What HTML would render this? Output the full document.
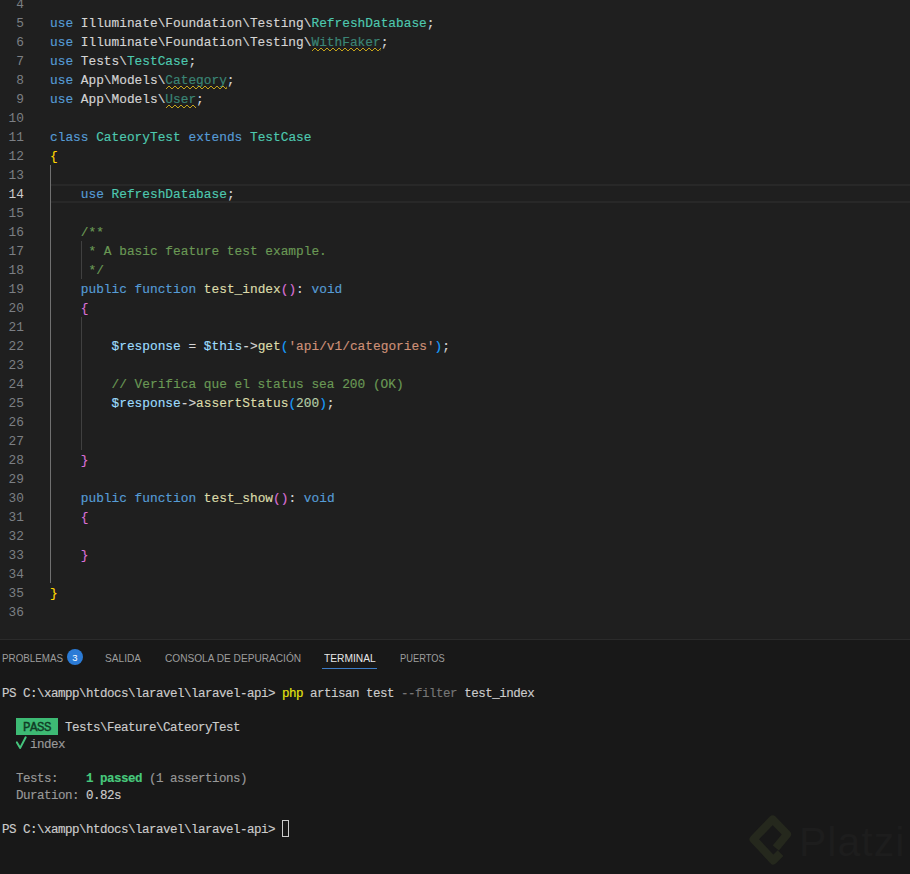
<!DOCTYPE html>
<html><head><meta charset="utf-8">
<style>
html,body{margin:0;padding:0;}
body{width:910px;height:874px;overflow:hidden;background:#1f1f1f;position:relative;font-family:"Liberation Mono",monospace;}
.ed{position:absolute;left:0;top:0;width:910px;height:639px;background:#1f1f1f;overflow:hidden;}
.ln{position:absolute;left:0;width:24px;text-align:right;height:19px;line-height:19px;font-size:12.826px;color:#7c7f84;white-space:pre;}
.ln.act{color:#cccccc;}
.cl{-webkit-text-stroke:0.15px currentColor;position:absolute;left:50px;height:19px;line-height:19px;font-size:12.826px;white-space:pre;color:#d4d4d4;}
.cur{position:absolute;left:50px;right:0;top:184px;height:19px;box-sizing:border-box;border-top:2px solid #282828;border-bottom:2px solid #282828;}
.ig{position:absolute;width:1px;background:#404040;}
.ig.act{background:#707070;}
.fade{opacity:0.6;}
.sq{position:absolute;height:4px;}
.panel{position:absolute;left:0;top:639px;width:910px;height:235px;background:#181818;border-top:1px solid #2b2b2b;box-sizing:border-box;}
.tab{position:absolute;top:651px;height:14px;line-height:14px;font-family:"Liberation Sans",sans-serif;font-size:11px;color:#9d9d9d;white-space:pre;transform-origin:0 50%;}
.tab.act{color:#e7e7e7;}
.badge{position:absolute;left:67px;top:649px;width:16px;height:16px;border-radius:8px;background:#2b7bd6;color:#fff;font-family:"Liberation Sans",sans-serif;font-size:9.5px;line-height:18px;text-align:center;}
.tl{-webkit-text-stroke:0.15px currentColor;position:absolute;left:2px;height:17px;line-height:17px;font-size:12.5px;letter-spacing:-0.5px;white-space:pre;color:#cccccc;}
</style></head><body>
<div class="ed">

<div class="cur"></div>
<div class="ln" style="top:-5px">4</div>
<div class="ln" style="top:14px">5</div>
<div class="ln" style="top:33px">6</div>
<div class="ln" style="top:52px">7</div>
<div class="ln" style="top:71px">8</div>
<div class="ln" style="top:90px">9</div>
<div class="ln" style="top:109px">10</div>
<div class="ln" style="top:128px">11</div>
<div class="ln" style="top:147px">12</div>
<div class="ln" style="top:166px">13</div>
<div class="ln act" style="top:185px">14</div>
<div class="ln" style="top:204px">15</div>
<div class="ln" style="top:223px">16</div>
<div class="ln" style="top:242px">17</div>
<div class="ln" style="top:261px">18</div>
<div class="ln" style="top:280px">19</div>
<div class="ln" style="top:299px">20</div>
<div class="ln" style="top:318px">21</div>
<div class="ln" style="top:337px">22</div>
<div class="ln" style="top:356px">23</div>
<div class="ln" style="top:375px">24</div>
<div class="ln" style="top:394px">25</div>
<div class="ln" style="top:413px">26</div>
<div class="ln" style="top:432px">27</div>
<div class="ln" style="top:451px">28</div>
<div class="ln" style="top:470px">29</div>
<div class="ln" style="top:489px">30</div>
<div class="ln" style="top:508px">31</div>
<div class="ln" style="top:527px">32</div>
<div class="ln" style="top:546px">33</div>
<div class="ln" style="top:565px">34</div>
<div class="ln" style="top:584px">35</div>
<div class="ln" style="top:603px">36</div>
<div class="ig act" style="left:50px;top:165px;height:418px"></div>
<div class="ig" style="left:81px;top:241px;height:38px"></div>
<div class="ig" style="left:81px;top:317px;height:133px"></div>
<div class="cl" style="top:14px"><span style="color:#569cd6">use</span><span style="color:#d4d4d4"> Illuminate\Foundation\Testing\</span><span style="color:#4ec9b0">RefreshDatabase</span><span style="color:#d4d4d4">;</span></div>
<div class="cl" style="top:33px"><span style="color:#569cd6">use</span><span style="color:#d4d4d4"> Illuminate\Foundation\Testing\</span><span class="fade" style="color:#4ec9b0">WithFaker</span><span style="color:#d4d4d4">;</span></div>
<div class="cl" style="top:52px"><span style="color:#569cd6">use</span><span style="color:#d4d4d4"> Tests\</span><span style="color:#4ec9b0">TestCase</span><span style="color:#d4d4d4">;</span></div>
<div class="cl" style="top:71px"><span style="color:#569cd6">use</span><span style="color:#d4d4d4"> App\Models\</span><span class="fade" style="color:#4ec9b0">Category</span><span style="color:#d4d4d4">;</span></div>
<div class="cl" style="top:90px"><span style="color:#569cd6">use</span><span style="color:#d4d4d4"> App\Models\</span><span class="fade" style="color:#4ec9b0">User</span><span style="color:#d4d4d4">;</span></div>
<div class="cl" style="top:128px"><span style="color:#569cd6">class</span><span style="color:#d4d4d4"> </span><span style="color:#4ec9b0">CateoryTest</span><span style="color:#d4d4d4"> </span><span style="color:#569cd6">extends</span><span style="color:#d4d4d4"> </span><span style="color:#4ec9b0">TestCase</span></div>
<div class="cl" style="top:147px"><span style="color:#ffd700">{</span></div>
<div class="cl" style="top:185px"><span style="color:#d4d4d4">    </span><span style="color:#569cd6">use</span><span style="color:#d4d4d4"> </span><span style="color:#4ec9b0">RefreshDatabase</span><span style="color:#d4d4d4">;</span></div>
<div class="cl" style="top:223px"><span style="color:#6a9955">    /**</span></div>
<div class="cl" style="top:242px"><span style="color:#6a9955">     * A basic feature test example.</span></div>
<div class="cl" style="top:261px"><span style="color:#6a9955">     */</span></div>
<div class="cl" style="top:280px"><span style="color:#d4d4d4">    </span><span style="color:#569cd6">public</span><span style="color:#d4d4d4"> </span><span style="color:#569cd6">function</span><span style="color:#d4d4d4"> </span><span style="color:#dcdcaa">test_index</span><span style="color:#da70d6">()</span><span style="color:#d4d4d4">: </span><span style="color:#569cd6">void</span></div>
<div class="cl" style="top:299px"><span style="color:#d4d4d4">    </span><span style="color:#da70d6">{</span></div>
<div class="cl" style="top:337px"><span style="color:#d4d4d4">        </span><span style="color:#9cdcfe">$response</span><span style="color:#d4d4d4"> = </span><span style="color:#9cdcfe">$this</span><span style="color:#d4d4d4">-&gt;</span><span style="color:#dcdcaa">get</span><span style="color:#179fff">(</span><span style="color:#ce9178">&#x27;api/v1/categories&#x27;</span><span style="color:#179fff">)</span><span style="color:#d4d4d4">;</span></div>
<div class="cl" style="top:375px"><span style="color:#6a9955">        // Verifica que el status sea 200 (OK)</span></div>
<div class="cl" style="top:394px"><span style="color:#d4d4d4">        </span><span style="color:#9cdcfe">$response</span><span style="color:#d4d4d4">-&gt;</span><span style="color:#dcdcaa">assertStatus</span><span style="color:#179fff">(</span><span style="color:#b5cea8">200</span><span style="color:#179fff">)</span><span style="color:#d4d4d4">;</span></div>
<div class="cl" style="top:451px"><span style="color:#d4d4d4">    </span><span style="color:#da70d6">}</span></div>
<div class="cl" style="top:489px"><span style="color:#d4d4d4">    </span><span style="color:#569cd6">public</span><span style="color:#d4d4d4"> </span><span style="color:#569cd6">function</span><span style="color:#d4d4d4"> </span><span style="color:#dcdcaa">test_show</span><span style="color:#da70d6">()</span><span style="color:#d4d4d4">: </span><span style="color:#569cd6">void</span></div>
<div class="cl" style="top:508px"><span style="color:#d4d4d4">    </span><span style="color:#da70d6">{</span></div>
<div class="cl" style="top:546px"><span style="color:#d4d4d4">    </span><span style="color:#da70d6">}</span></div>
<div class="cl" style="top:584px"><span style="color:#ffd700">}</span></div>
<svg class="sq" style="left:311.7px;top:48px;width:69.3px" width="69.3" height="4"><polyline points="0.0,3 3.0,0 6.0,3 9.0,0 12.0,3 15.0,0 18.0,3 21.0,0 24.0,3 27.0,0 30.0,3 33.0,0 36.0,3 39.0,0 42.0,3 45.0,0 48.0,3 51.0,0 54.0,3 57.0,0 60.0,3 63.0,0 66.0,3 69.0,0 69.3,3" fill="none" stroke="#c4a41c" stroke-width="1"/></svg>
<svg class="sq" style="left:165.5px;top:86px;width:61.6px" width="61.6" height="4"><polyline points="0.0,3 3.0,0 6.0,3 9.0,0 12.0,3 15.0,0 18.0,3 21.0,0 24.0,3 27.0,0 30.0,3 33.0,0 36.0,3 39.0,0 42.0,3 45.0,0 48.0,3 51.0,0 54.0,3 57.0,0 60.0,3 61.6,0" fill="none" stroke="#c4a41c" stroke-width="1"/></svg>
<svg class="sq" style="left:165.5px;top:105px;width:30.8px" width="30.8" height="4"><polyline points="0.0,3 3.0,0 6.0,3 9.0,0 12.0,3 15.0,0 18.0,3 21.0,0 24.0,3 27.0,0 30.0,3 30.8,0" fill="none" stroke="#c4a41c" stroke-width="1"/></svg>
</div>
<div class="panel"></div>
<div class="tab" style="left:2px;transform:scaleX(0.893)">PROBLEMAS</div>
<div class="tab" style="left:105px;transform:scaleX(0.92)">SALIDA</div>
<div class="tab" style="left:164.5px;transform:scaleX(0.92)">CONSOLA DE DEPURACIÓN</div>
<div class="tab act" style="left:324.3px;transform:scaleX(0.93)">TERMINAL</div>
<div class="tab" style="left:400px;transform:scaleX(0.846)">PUERTOS</div>
<div class="badge">3</div>
<div style="position:absolute;left:322px;top:668px;width:55px;height:1px;background:#3d7cc6"></div>
<div style="position:absolute;left:16px;top:718px;width:42px;height:17px;background:#3dba74"></div>
<div class="tl" style="top:686px"><span style="color:#cccccc">PS C:\xampp\htdocs\laravel\laravel-api&gt; </span><span style="color:#e5e510">php</span><span style="color:#cccccc"> artisan test </span><span style="color:#767676">--filter</span><span style="color:#cccccc"> test_index</span></div>
<div class="tl" style="top:720px"><span style="color:#cccccc">  </span><span style="color:#103c25;-webkit-text-stroke:0.4px #103c25"> PASS </span><span style="color:#cccccc"> Tests\Feature\CateoryTest</span></div>
<div class="tl" style="top:737px"><span style="color:#9a9a9a">    index</span></div>
<div class="tl" style="top:771px"><span style="color:#999999">  Tests:    </span><span style="color:#47c97c;font-weight:bold">1 passed</span><span style="color:#999999"> (1 assertions)</span></div>
<div class="tl" style="top:788px"><span style="color:#999999">  Duration: </span><span style="color:#cccccc">0.82s</span></div>
<div class="tl" style="top:822px"><span style="color:#cccccc">PS C:\xampp\htdocs\laravel\laravel-api&gt; </span></div>
<svg style="position:absolute;left:14px;top:735px" width="16" height="16"><polyline points="2.9,7.4 6.2,12.9 11.7,2.3" fill="none" stroke="#45c47c" stroke-width="2" stroke-linejoin="round" stroke-linecap="round"/></svg>
<div style="position:absolute;left:282px;top:820px;width:7px;height:17px;box-sizing:border-box;border:1px solid #cccccc"></div>
<svg style="position:absolute;left:740px;top:808px" width="60" height="62" viewBox="740 808 60 62"><polyline points="775.8,848 787.1,834.2 772.6,819.4 753.5,839.2 773.3,860.4 780.5,853.2" fill="none" stroke="#25281d" stroke-width="8" stroke-linejoin="round"/></svg>
<div style="position:absolute;left:799px;top:817px;font-family:'Liberation Sans',sans-serif;font-size:41px;line-height:50px;color:#1d1d1d;white-space:pre;letter-spacing:1px">Platzi</div>
</body></html>
